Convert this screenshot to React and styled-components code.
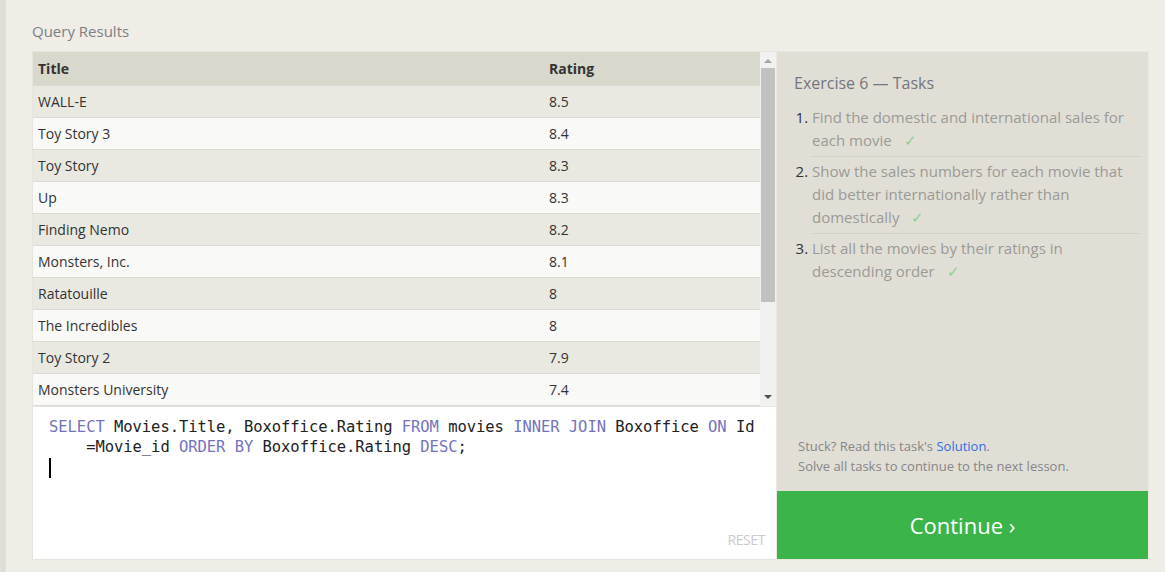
import styled, { createGlobalStyle } from "styled-components";

const GlobalStyle = createGlobalStyle`
  html, body {
    margin: 0;
    padding: 0;
    background: #efede6;
    font-family: "Open Sans", "Noto Sans", sans-serif;
  }
`;

const Page = styled.div`
  display: flex;
  height: 572px;
  overflow: hidden;
`;

const LeftStrip = styled.div`
  width: 6px;
  background: #e0ddd7;
  flex-shrink: 0;
`;

const Main = styled.div`
  flex: 1;
  padding: 21px 16px 12px 26px;
  display: flex;
  flex-direction: column;
`;

const SectionLabel = styled.div`
  font-size: 15px;
  color: #7b7f86;
  line-height: 21px;
  margin: 0 0 9px 0;
`;

const Workspace = styled.div`
  display: grid;
  grid-template-columns: 744px 373px;
  height: 509px;
`;

const LeftCol = styled.div`
  display: flex;
  flex-direction: column;
  border: 1px solid #e6e4dd;
  border-right: none;
`;

const Results = styled.div`
  display: flex;
  height: 354px;
  border-bottom: 1px solid #e8e6df;
`;

const TableWrap = styled.div`
  flex: 1;
  overflow: hidden;
`;

const Table = styled.table`
  width: 100%;
  border-collapse: collapse;
  font-size: 14px;
  color: #333;
`;

const HeadCell = styled.th`
  text-align: left;
  font-weight: 700;
  height: 33px;
  padding: 0 5px;
  background: #d9d8cc;
  width: ${(p) => p.$width || "auto"};
`;

const Row = styled.tr`
  background: ${(p) => (p.$odd ? "#eae9e1" : "#f9f9f7")};
  border-top: 1px solid #dcdad2;
`;

const Cell = styled.td`
  height: 31px;
  padding: 0 5px;
`;

const Scrollbar = styled.div`
  width: 16px;
  background: #f1f1f1;
  display: flex;
  flex-direction: column;
  align-items: center;
`;

const Arrow = styled.div`
  width: 0;
  height: 0;
  border-left: 4px solid transparent;
  border-right: 4px solid transparent;
  ${(p) =>
    p.$down
      ? "border-top: 4px solid #505050; margin-bottom: 7px;"
      : "border-bottom: 4px solid #a3a3a3; margin-top: 7px;"}
`;

const Thumb = styled.div`
  width: 14px;
  height: 234px;
  background: #c1c1c1;
  margin-top: 5px;
`;

const Spacer = styled.div`
  flex: 1;
`;

const Editor = styled.div`
  flex: 1;
  background: #fff;
  position: relative;
  padding: 10px 16px;
  font-family: "DejaVu Sans Mono", "Liberation Mono", monospace;
  font-size: 15.5px;
  line-height: 20px;
  color: #222;
  letter-spacing: -0.05px;
`;

const CodeLine = styled.div`
  white-space: pre;
`;

const Kw = styled.span`
  color: #7373bd;
`;

const Caret = styled.div`
  width: 2px;
  height: 20px;
  background: #000;
  margin-top: 1px;
`;

const Reset = styled.div`
  position: absolute;
  right: 11px;
  bottom: 9px;
  font-family: "Open Sans", sans-serif;
  font-size: 14px;
  color: #cbcbcb;
  letter-spacing: -0.4px;
`;

const Panel = styled.div`
  display: flex;
  flex-direction: column;
  background: #e1dfd5;
  border: 1px solid #e9e7df;
`;

const PanelBody = styled.div`
  flex: 1;
  display: flex;
  flex-direction: column;
  padding: 20px 8px 15px 17px;
`;

const PanelTitle = styled.div`
  font-size: 16px;
  color: #737680;
  line-height: 22px;
  margin-bottom: 9px;
`;

const TaskList = styled.ol`
  margin: 0;
  padding: 0 0 0 18px;
  font-size: 15px;
  line-height: 23px;
  color: #9a9a98;
`;

const Task = styled.li`
  padding: 3px 0 4px 0;
  border-bottom: ${(p) => (p.$last ? "none" : "1px solid #d3d1c7")};
  &::marker {
    color: #333;
  }
`;

const Check = styled.span`
  color: #8fcf8f;
  margin-left: 12px;
`;

const Help = styled.div`
  margin-top: auto;
  font-size: 13px;
  line-height: 20px;
  color: #85858a;
  padding-left: 4px;
`;

const SolutionLink = styled.a`
  color: #2f6ee0;
  text-decoration: none;
`;

const ContinueButton = styled.button`
  height: 68px;
  border: none;
  background: #3bb54a;
  color: #fff;
  font-family: "Open Sans", sans-serif;
  font-size: 22px;
  cursor: pointer;
`;

const rows = [
  ["WALL-E", "8.5"],
  ["Toy Story 3", "8.4"],
  ["Toy Story", "8.3"],
  ["Up", "8.3"],
  ["Finding Nemo", "8.2"],
  ["Monsters, Inc.", "8.1"],
  ["Ratatouille", "8"],
  ["The Incredibles", "8"],
  ["Toy Story 2", "7.9"],
  ["Monsters University", "7.4"],
  ["Cars", "7.2"],
  ["Brave", "7.2"],
];

export default function App() {
  return (
    <Page>
      <GlobalStyle />
      <LeftStrip />
      <Main>
        <SectionLabel>Query Results</SectionLabel>
        <Workspace>
          <LeftCol>
            <Results>
              <TableWrap>
                <Table>
                  <thead>
                    <tr>
                      <HeadCell $width="501px">Title</HeadCell>
                      <HeadCell>Rating</HeadCell>
                    </tr>
                  </thead>
                  <tbody>
                    {rows.map(([title, rating], i) => (
                      <Row key={title} $odd={i % 2 === 0}>
                        <Cell>{title}</Cell>
                        <Cell>{rating}</Cell>
                      </Row>
                    ))}
                  </tbody>
                </Table>
              </TableWrap>
              <Scrollbar>
                <Arrow />
                <Thumb />
                <Spacer />
                <Arrow $down />
              </Scrollbar>
            </Results>
            <Editor>
              <CodeLine>
                <Kw>SELECT</Kw> Movies.Title, Boxoffice.Rating <Kw>FROM</Kw> movies <Kw>INNER JOIN</Kw> Boxoffice <Kw>ON</Kw> Id
              </CodeLine>
              <CodeLine>
                {"    "}=Movie_id <Kw>ORDER BY</Kw> Boxoffice.Rating <Kw>DESC</Kw>;
              </CodeLine>
              <Caret />
              <Reset>RESET</Reset>
            </Editor>
          </LeftCol>
          <Panel>
            <PanelBody>
              <PanelTitle>Exercise 6 — Tasks</PanelTitle>
              <TaskList>
                <Task>
                  Find the domestic and international sales for each movie
                  <Check>✓</Check>
                </Task>
                <Task>
                  Show the sales numbers for each movie that did better internationally rather than domestically
                  <Check>✓</Check>
                </Task>
                <Task $last>
                  List all the movies by their ratings in descending order
                  <Check>✓</Check>
                </Task>
              </TaskList>
              <Help>
                Stuck? Read this task's <SolutionLink href="#">Solution</SolutionLink>.
                <br />
                Solve all tasks to continue to the next lesson.
              </Help>
            </PanelBody>
            <ContinueButton>Continue ›</ContinueButton>
          </Panel>
        </Workspace>
      </Main>
    </Page>
  );
}
